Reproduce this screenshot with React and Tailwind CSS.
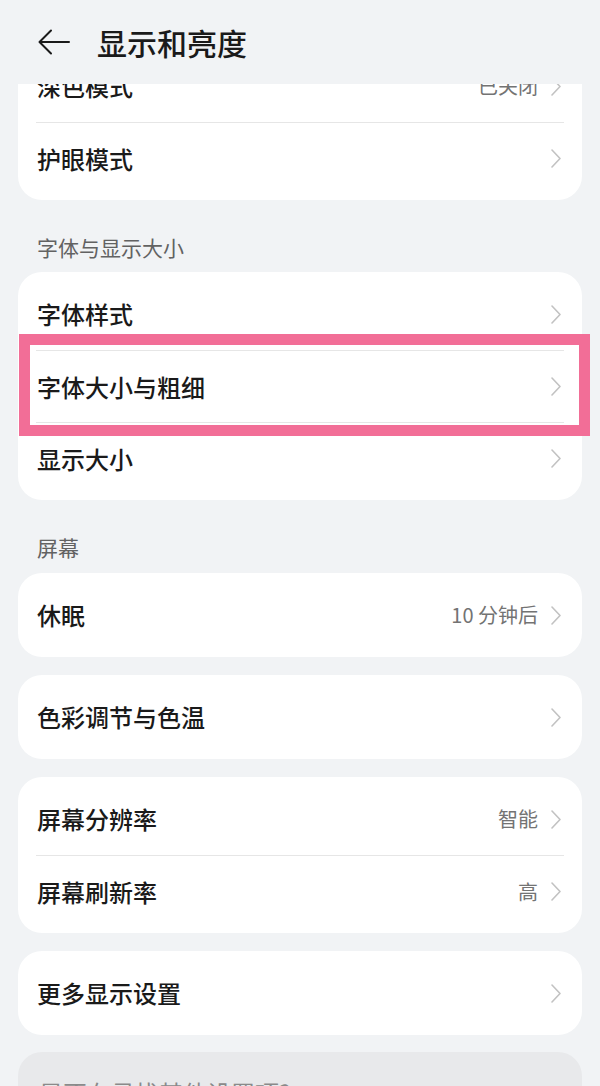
import React from "react";

const FONT = { fontFamily: '"Noto Sans CJK SC", "Noto Sans", sans-serif' };

function Chevron() {
  return (
    <svg width="10" height="19" viewBox="0 0 10 19" fill="none" className="shrink-0">
      <polyline points="1,1 9,9.5 1,18" stroke="#c2c2c2" strokeWidth="1.6" strokeLinecap="round" strokeLinejoin="round" />
    </svg>
  );
}

function Row({ label, value, divider, highlight }) {
  return (
    <div className="relative px-[18px]">
      <div className={"flex h-[72px] items-center pl-[1px] pr-[3px] " + (divider ? "border-t border-[#e6e6e6]" : "")}>
        <span className="flex-1 text-[24px] font-medium text-[#1a1a1a] leading-none">{label}</span>
        {value && <span className="mr-[13px] text-[20px] text-[#737373] leading-none">{value}</span>}
        <Chevron />
      </div>
      {highlight && (
        <div className="absolute left-[1px] -top-[16px] -right-[8px] -bottom-[14px] border-[11px] border-[#f26e97]" />
      )}
    </div>
  );
}

function Card({ rows, className = "" }) {
  return (
    <div className={"rounded-[24px] bg-white py-[6px] " + className}>
      {rows.map((r, i) => (
        <Row key={r.label} {...r} divider={i > 0} />
      ))}
    </div>
  );
}

function Label({ children, pb }) {
  return (
    <div className={"pl-[19px] pt-[35px] text-[21px] leading-[24px] text-[#626262] " + pb}>{children}</div>
  );
}

export default function App() {
  return (
    <div className="flex h-[1086px] w-[600px] flex-col overflow-hidden bg-[#f1f3f5]" style={FONT}>
      <header className="relative z-10 flex h-[84px] shrink-0 items-center bg-[#f1f3f5] pl-[38px]">
        <svg width="32" height="26" viewBox="0 0 32 26" fill="none">
          <path d="M31 13H2M13 1.5L1.5 13L13 24.5" stroke="#1a1a1a" strokeWidth="2" strokeLinecap="round" strokeLinejoin="round" />
        </svg>
        <h1 className="ml-[27px] text-[30px] font-medium leading-none text-[#1a1a1a]">显示和亮度</h1>
      </header>
      <div className="flex-1 overflow-hidden px-[18px]">
        <div className="-mt-[40px]">
          <Card
            rows={[
              { label: "深色模式", value: "已关闭" },
              { label: "护眼模式" },
            ]}
          />
          <Label pb="pb-[13px]">字体与显示大小</Label>
          <Card
            rows={[
              { label: "字体样式" },
              { label: "字体大小与粗细", highlight: true },
              { label: "显示大小" },
            ]}
          />
          <Label pb="pb-[14px]">屏幕</Label>
          <Card rows={[{ label: "休眠", value: "10 分钟后" }]} />
          <Card className="mt-[18px]" rows={[{ label: "色彩调节与色温" }]} />
          <Card
            className="mt-[18px]"
            rows={[
              { label: "屏幕分辨率", value: "智能" },
              { label: "屏幕刷新率", value: "高" },
            ]}
          />
          <Card className="mt-[18px]" rows={[{ label: "更多显示设置" }]} />
          <div className="mt-[17px] h-[120px] rounded-[24px] bg-[#e8e9eb] px-[21px] pt-[26px] text-[24px] leading-[30px] text-[#8a8a8a]">
            是否在寻找其他设置项?
          </div>
        </div>
      </div>
    </div>
  );
}
